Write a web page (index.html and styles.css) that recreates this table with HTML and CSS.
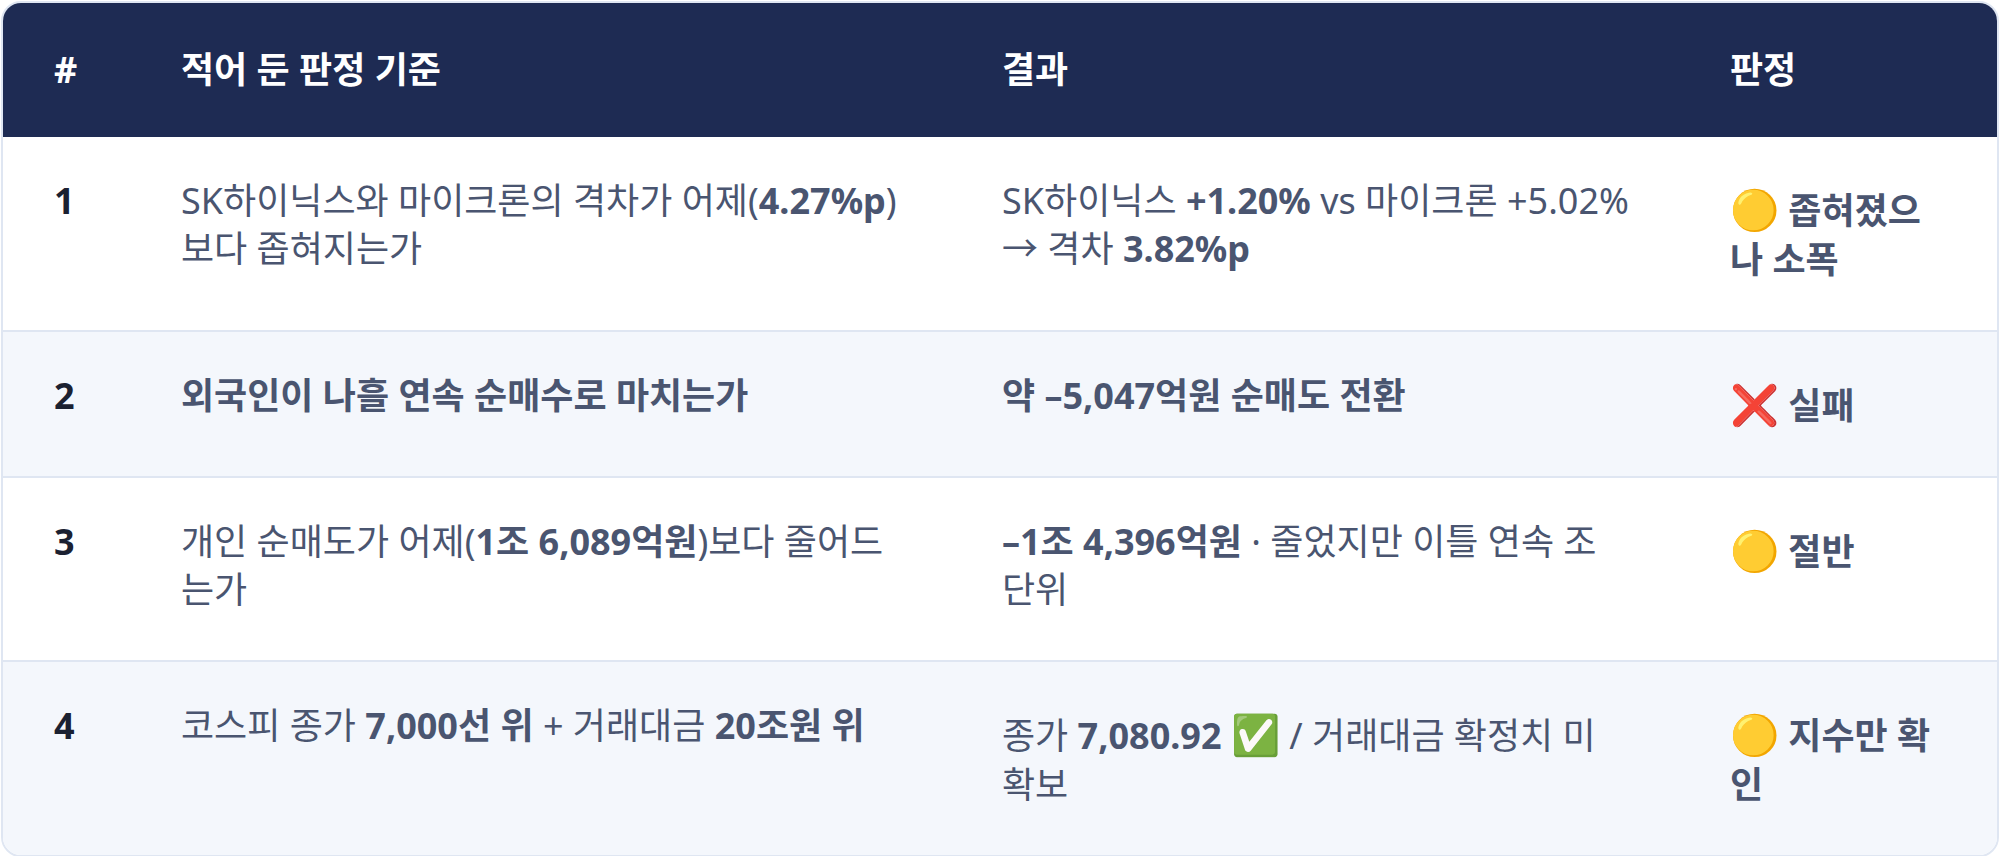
FILE: index.html
```html
<!DOCTYPE html>
<html lang="ko">
<head>
<meta charset="utf-8">
<title>판정 기준</title>
<link rel="stylesheet" href="styles.css">
</head>
<body>
<div class="card">
  <table class="grid">
    <colgroup>
      <col class="c-num">
      <col class="c-crit">
      <col class="c-res">
      <col class="c-ver">
    </colgroup>
    <thead>
      <tr>
        <th>#</th>
        <th>적어 둔 판정 기준</th>
        <th>결과</th>
        <th>판정</th>
      </tr>
    </thead>
    <tbody>
      <tr>
        <td class="num">1</td>
        <td>SK하이닉스와 마이크론의 격차가 어제(<b>4.27%p</b>) 보다 좁혀지는가</td>
        <td class="res">SK하이닉스 <b>+1.20%</b> vs 마이크론 +5.02% → 격차 <b>3.82%p</b></td>
        <td class="verdict"><span class="emo">🟡</span> 좁혀졌으나 소폭</td>
      </tr>
      <tr class="alt">
        <td class="num">2</td>
        <td><b>외국인이 나흘 연속 순매수로 마치는가</b></td>
        <td class="res"><b>약 –5,047억원 순매도 전환</b></td>
        <td class="verdict"><span class="emo">❌</span> 실패</td>
      </tr>
      <tr>
        <td class="num">3</td>
        <td>개인 순매도가 어제(<b>1조 6,089억원</b>)보다 줄어드는가</td>
        <td class="res"><b>–1조 4,396억원</b> · 줄었지만 이틀 연속 조 <span class="nw">단위</span></td>
        <td class="verdict"><span class="emo">🟡</span> 절반</td>
      </tr>
      <tr class="alt">
        <td class="num">4</td>
        <td>코스피 종가 <b>7,000선 위</b> + 거래대금 <b>20조원 위</b></td>
        <td class="res">종가 <b>7,080.92</b> <span class="emo">✅</span> / 거래대금 확정치 미<span class="nw">확보</span></td>
        <td class="verdict"><span class="emo">🟡</span> 지수만 확인</td>
      </tr>
    </tbody>
  </table>
</div>
</body>
</html>
```

FILE: styles.css
```css
html, body {
  margin: 0;
  padding: 0;
  background: #ffffff;
}

body {
  font-family: "Noto Sans", "Noto Sans CJK KR", sans-serif;
  font-size: 36px;
  line-height: 1.333;
  color: #4a5570;
}

.card {
  margin: 1px;
  border: 2px solid #dfe6f2;
  border-radius: 20px;
  overflow: hidden;
  background: #ffffff;
}

.grid {
  width: 100%;
  border-collapse: separate;
  border-spacing: 0;
  table-layout: fixed;
}

.c-num { width: 127px; }
.c-crit { width: 821px; }
.c-res { width: 728px; }
.c-ver { width: 318px; }

.grid th {
  background: #1e2b53;
  color: #ffffff;
  font-weight: 700;
  text-align: left;
  padding: 43px 51px;
  vertical-align: middle;
}

.grid td {
  padding: 40px 51px 46px;
  vertical-align: top;
  text-align: left;
}

.grid td.res {
  padding-right: 40px;
}

.grid tbody tr + tr td {
  border-top: 2px solid #dfe6f2;
}

.grid tr.alt td {
  background: #f4f7fc;
}

.grid b {
  font-weight: 700;
}

.num {
  color: #1b2131;
  font-weight: 700;
}

.verdict {
  font-weight: 700;
}

.emo {
  display: inline-block;
  font-size: 1.1em;
  line-height: 1;
  padding: 13px 0 6px;
}

.nw {
  white-space: nowrap;
}
```
